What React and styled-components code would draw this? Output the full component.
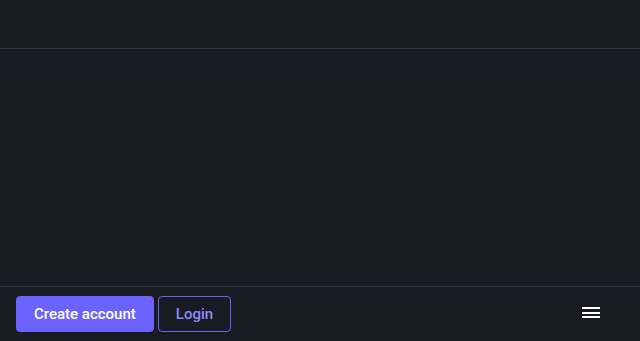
import React from 'react';
import styled, { createGlobalStyle } from 'styled-components';

const Global = createGlobalStyle`
    html, body {
        margin: 0;
        padding: 0;
        background-color: #1a1a22;
        font-family: Roboto, "Noto Sans", sans-serif;
    }
`

export default function App() {
    return (
        <Page>
            <Global />
            <Header />
            <Main />
            <Footer>
                <Buttons>
                    <Button>Create account</Button>
                    <LoginButton>Login</LoginButton>
                </Buttons>
                <Menu aria-label="menu">
                    <span />
                    <span />
                    <span />
                </Menu>
            </Footer>
        </Page>
    )
}

const Page = styled.div`
    display: flex;
    flex-direction: column;
    min-height: 394px;
    background-color: #1a1a22;
`

const Header = styled.header`
    height: 48px;
    border-bottom: 1px solid #33343f;
`

const Main = styled.main`
    height: 237px;
`

// right padding leaves room where the reference shows the page scrollbar
const Footer = styled.footer`
    border-top: 1px solid #33343f;
    display: flex;
    justify-content: space-between;
    align-items: flex-start;
    padding: 9px 40px 60px 16px;
`

const Buttons = styled.div`
    display: flex;
    gap: 4px;
`

const Button = styled.button`
    height: 36px;
    padding: 0 17px;
    border-radius: 4px;
    border: 1px solid #6c63ff;
    background-color: #6c63ff;
    color: #ffffff;
    font-family: Roboto, "Noto Sans", sans-serif;
    font-size: 15px;
    font-weight: 500;
    cursor: pointer;
`

const LoginButton = styled(Button)`
    background-color: transparent;
    color: #8f8aff;
`

const Menu = styled.div`
    margin-top: 11px;
    width: 18px;
    display: flex;
    flex-direction: column;
    gap: 2.5px;

    span {
        display: block;
        height: 2px;
        background-color: #ffffff;
    }
`
